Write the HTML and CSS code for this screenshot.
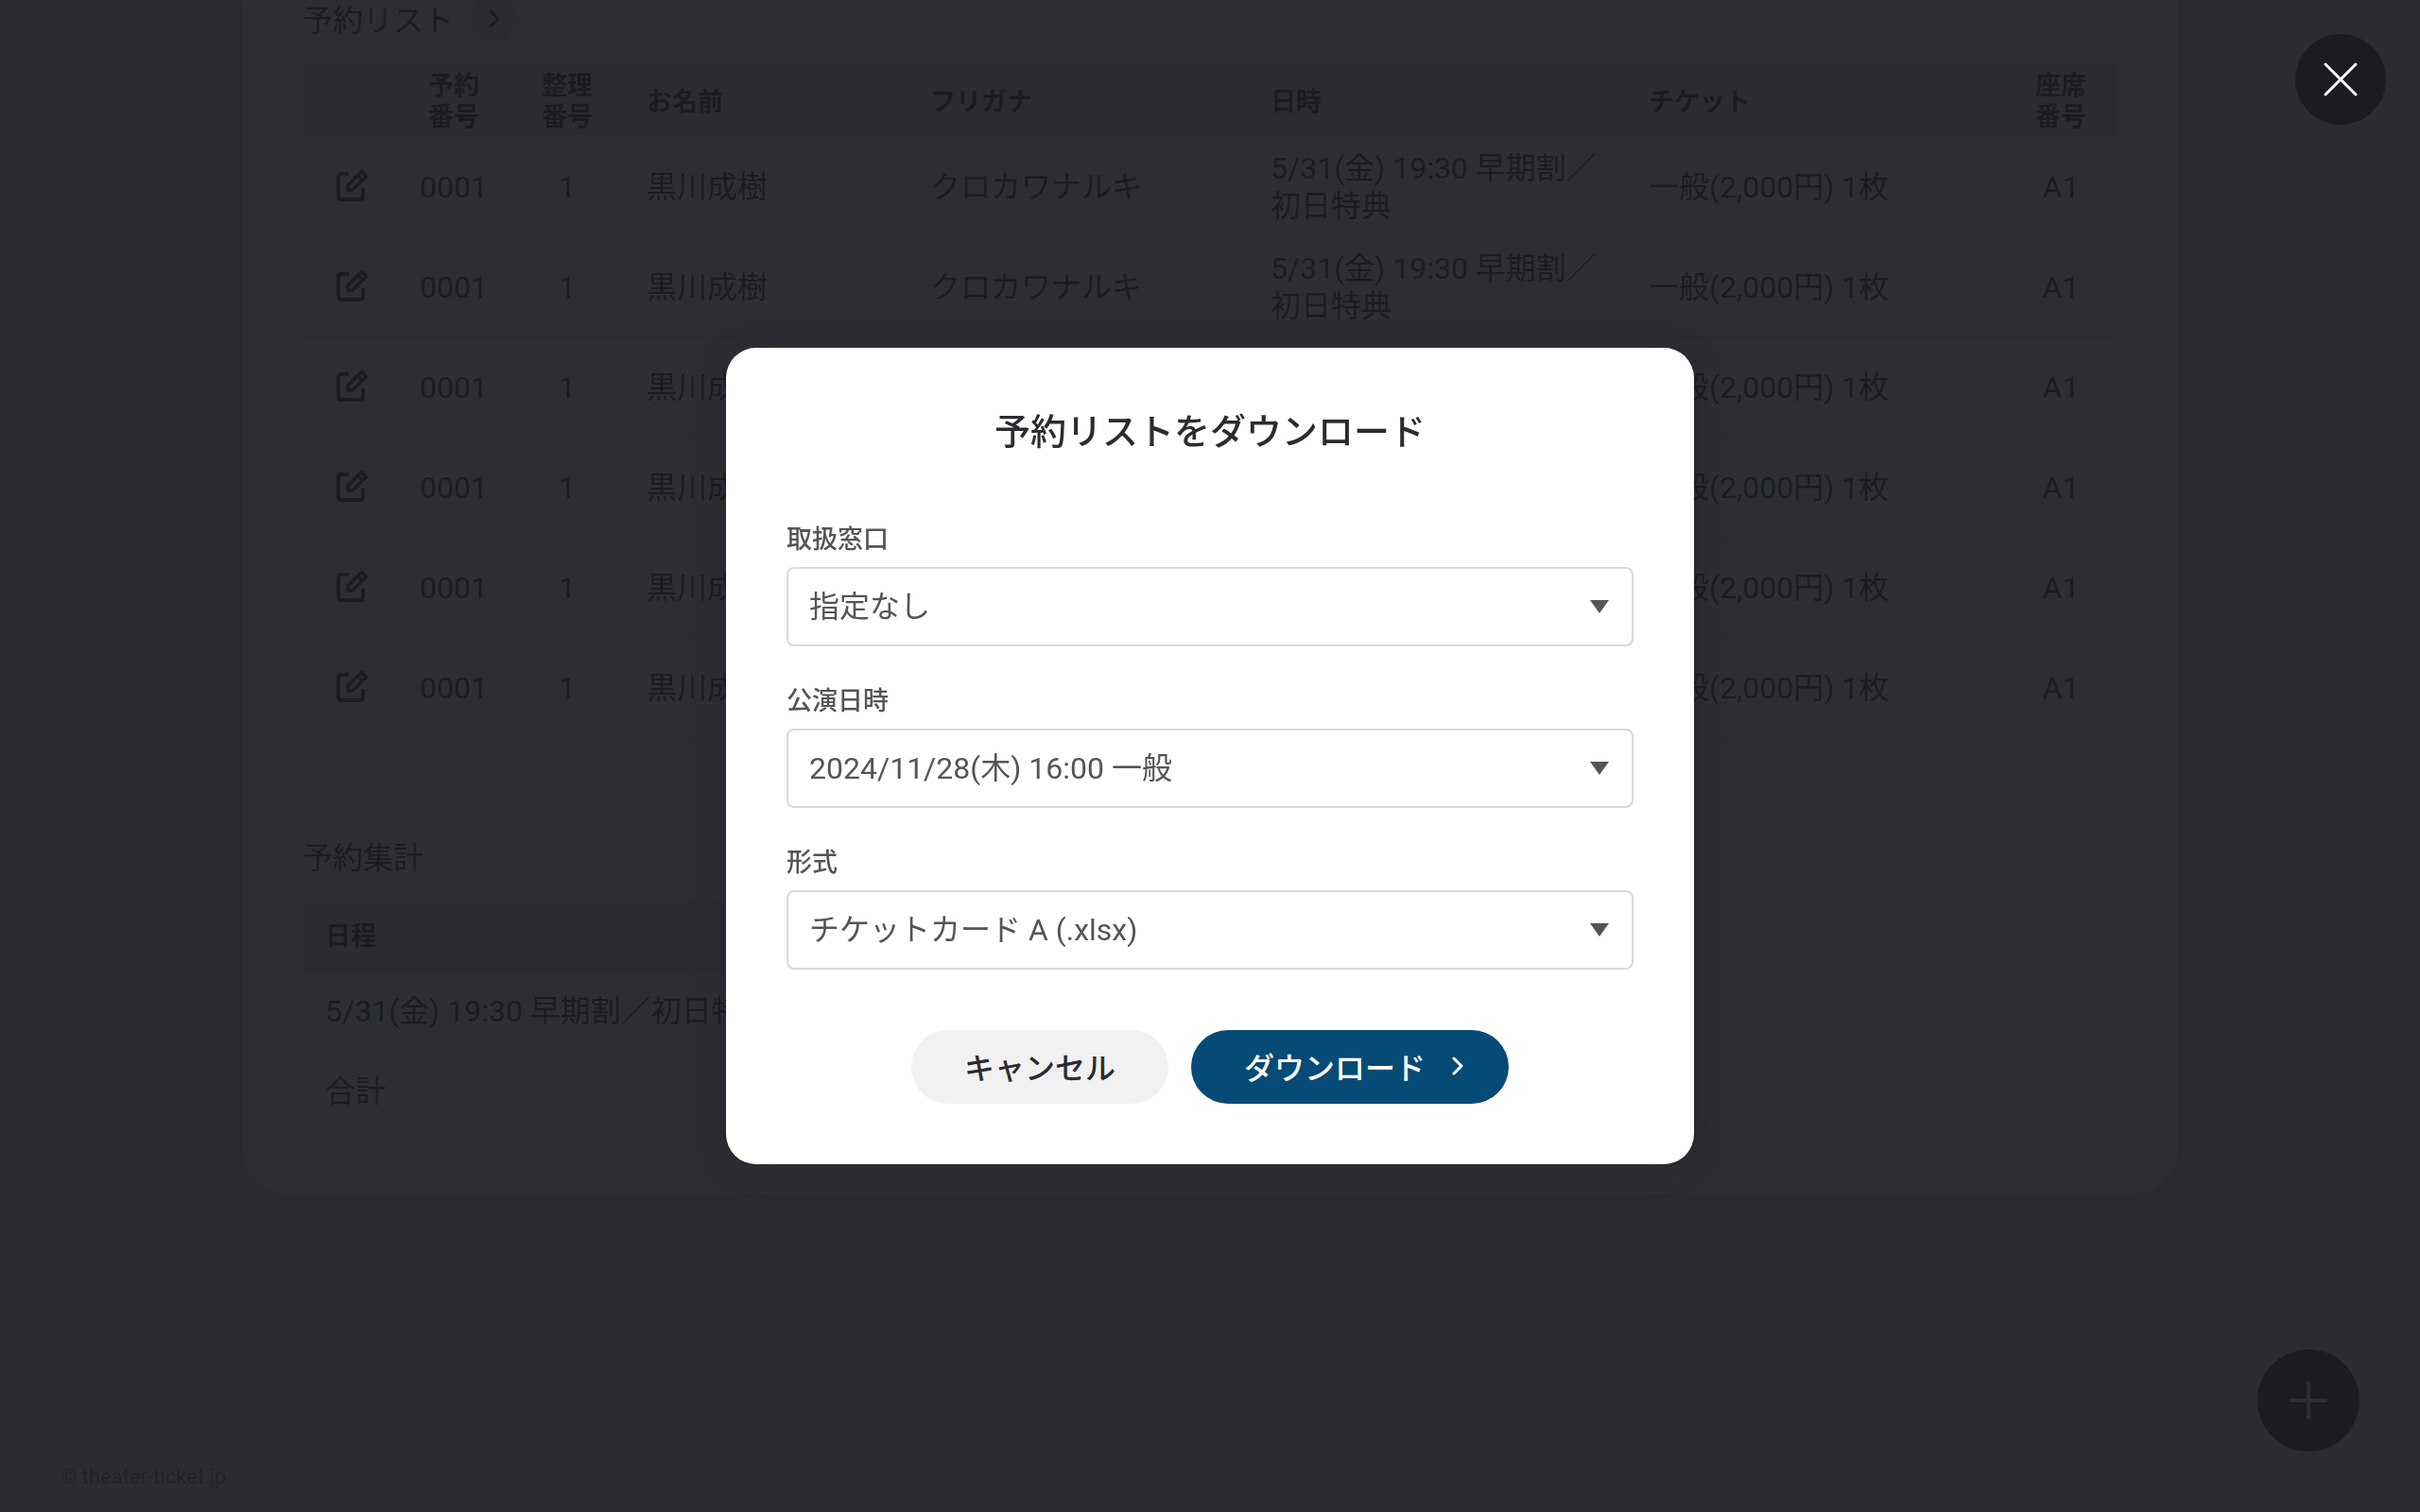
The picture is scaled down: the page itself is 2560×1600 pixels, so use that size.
FILE: index.html
```
<!DOCTYPE html>
<html lang="ja">
<head>
    <meta charset="UTF-8">
    <meta name="viewport" content="width=device-width, initial-scale=1.0">
    <title>予約リスト</title>
    <link rel="stylesheet" href="styles.css">
</head>
<body>

<svg class="symbols" aria-hidden="true">
    <symbol id="icon-edit" viewBox="0 0 34 34" fill="none" stroke="currentColor" stroke-width="4" stroke-linejoin="round">
        <path d="M13 5H5Q2 5 2 8V29Q2 32 5 32H25Q28 32 28 29V20"/>
        <path d="M12 17L26.500 2.500L31.500 7.500L17 22H12Z" stroke-width="3.500"/>
        <path d="M22.500 6.500L27.500 11.500" stroke-width="3"/>
    </symbol>
    <symbol id="icon-arrow" viewBox="0 0 12 20" fill="none" stroke="currentColor" stroke-width="3" stroke-linecap="round" stroke-linejoin="round">
        <path d="M2 2L10 10L2 18"/>
    </symbol>
</svg>

<main class="card">
    <section class="section">
        <div class="section-head">
            <h2>予約リスト</h2>
            <a href="#" class="more" aria-label="予約リストへ"><svg class="arrow"><use href="#icon-arrow"/></svg></a>
        </div>
        <table class="list">
            <colgroup>
                <col class="col-edit">
                <col class="col-num">
                <col class="col-num">
                <col class="col-name">
                <col class="col-kana">
                <col class="col-date">
                <col class="col-ticket">
                <col class="col-num">
            </colgroup>
            <thead>
                <tr>
                    <th></th>
                    <th class="center">予約<br>番号</th>
                    <th class="center">整理<br>番号</th>
                    <th>お名前</th>
                    <th>フリガナ</th>
                    <th>日時</th>
                    <th>チケット</th>
                    <th class="center">座席<br>番号</th>
                </tr>
            </thead>
            <tbody>
                <tr>
                    <td class="center"><a href="#" class="edit" aria-label="編集"><svg><use href="#icon-edit"/></svg></a></td>
                    <td class="center">0001</td>
                    <td class="center">1</td>
                    <td>黒川成樹</td>
                    <td>クロカワナルキ</td>
                    <td>5/31(金) 19:30 早期割／初日特典</td>
                    <td>一般(2,000円) 1枚</td>
                    <td class="center">A1</td>
                </tr>
                <tr>
                    <td class="center"><a href="#" class="edit" aria-label="編集"><svg><use href="#icon-edit"/></svg></a></td>
                    <td class="center">0001</td>
                    <td class="center">1</td>
                    <td>黒川成樹</td>
                    <td>クロカワナルキ</td>
                    <td>5/31(金) 19:30 早期割／初日特典</td>
                    <td>一般(2,000円) 1枚</td>
                    <td class="center">A1</td>
                </tr>
                <tr>
                    <td class="center"><a href="#" class="edit" aria-label="編集"><svg><use href="#icon-edit"/></svg></a></td>
                    <td class="center">0001</td>
                    <td class="center">1</td>
                    <td>黒川成樹</td>
                    <td>クロカワナルキ</td>
                    <td>5/31(金) 19:30 早期割／初日特典</td>
                    <td>一般(2,000円) 1枚</td>
                    <td class="center">A1</td>
                </tr>
                <tr>
                    <td class="center"><a href="#" class="edit" aria-label="編集"><svg><use href="#icon-edit"/></svg></a></td>
                    <td class="center">0001</td>
                    <td class="center">1</td>
                    <td>黒川成樹</td>
                    <td>クロカワナルキ</td>
                    <td>5/31(金) 19:30 早期割／初日特典</td>
                    <td>一般(2,000円) 1枚</td>
                    <td class="center">A1</td>
                </tr>
                <tr>
                    <td class="center"><a href="#" class="edit" aria-label="編集"><svg><use href="#icon-edit"/></svg></a></td>
                    <td class="center">0001</td>
                    <td class="center">1</td>
                    <td>黒川成樹</td>
                    <td>クロカワナルキ</td>
                    <td>5/31(金) 19:30 早期割／初日特典</td>
                    <td>一般(2,000円) 1枚</td>
                    <td class="center">A1</td>
                </tr>
                <tr>
                    <td class="center"><a href="#" class="edit" aria-label="編集"><svg><use href="#icon-edit"/></svg></a></td>
                    <td class="center">0001</td>
                    <td class="center">1</td>
                    <td>黒川成樹</td>
                    <td>クロカワナルキ</td>
                    <td>5/31(金) 19:30 早期割／初日特典</td>
                    <td>一般(2,000円) 1枚</td>
                    <td class="center">A1</td>
                </tr>
            </tbody>
        </table>
    </section>

    <section class="section">
        <div class="section-head">
            <h2>予約集計</h2>
        </div>
        <table class="summary">
            <thead>
                <tr><th>日程</th></tr>
            </thead>
            <tbody>
                <tr><td>5/31(金) 19:30 早期割／初日特典</td></tr>
                <tr><td>合計</td></tr>
            </tbody>
        </table>
    </section>
</main>

<footer class="footer">© theater-ticket.jp</footer>

<button type="button" class="round-btn add-btn" aria-label="追加">
    <svg viewBox="0 0 40 40"><path d="M20 2V38M2 20H38"/></svg>
</button>

<!-- モーダル -->
<div class="overlay">
    <div class="modal" role="dialog" aria-modal="true" aria-labelledby="modalTitle">
        <h1 id="modalTitle">予約リストをダウンロード</h1>

        <form id="downloadForm">
            <div class="input-group">
                <label for="counter">取扱窓口</label>
                <select id="counter" name="counter">
                    <option>指定なし</option>
                </select>
            </div>
            <div class="input-group">
                <label for="stage">公演日時</label>
                <select id="stage" name="stage">
                    <option>2024/11/28(木) 16:00 一般</option>
                </select>
            </div>
            <div class="input-group">
                <label for="format">形式</label>
                <select id="format" name="format">
                    <option>チケットカード A (.xlsx)</option>
                </select>
            </div>
            <div class="buttons">
                <button type="button" class="btn">キャンセル</button>
                <button type="submit" class="btn primary-btn">ダウンロード<svg class="arrow"><use href="#icon-arrow"/></svg></button>
            </div>
        </form>
    </div>

    <button type="button" class="round-btn close-btn" aria-label="閉じる">
        <svg viewBox="0 0 40 40"><path d="M4 4L36 36M36 4L4 36"/></svg>
    </button>
</div>

</body>
</html>
```

FILE: styles.css
```
* {
    box-sizing: border-box;
}

body {
    display: flex;
    flex-direction: column;
    min-height: 100vh;
    margin: 0;
    background-color: #dfe1ea;
    color: #1b1c21;
    font-family: Roboto, "Noto Sans CJK JP", sans-serif;
    font-size: 32px;
    line-height: 40px;
}

h1, h2 {
    margin: 0;
    font-weight: 500;
}

a {
    color: inherit;
}

button, select {
    font-family: inherit;
    font-size: inherit;
}

.symbols {
    position: absolute;
    width: 0;
    height: 0;
}

.card {
    width: 80%;
    margin: -4px auto 0;
    padding: 0 64px 64px;
    background-color: white;
    border-radius: 0 0 48px 48px;
    box-shadow: 0 4px 16px rgba(0, 0, 0, 0.1);
}

.section + .section {
    margin-top: 100px;
}

.section-head {
    display: flex;
    align-items: center;
    gap: 18px;
    height: 48px;
    margin-bottom: 24px;
}

h2 {
    padding-top: 4px;
    font-size: 32px;
    font-weight: 400;
}

.more {
    display: flex;
    justify-content: center;
    align-items: center;
    width: 48px;
    height: 48px;
    padding-left: 2px;
    border-radius: 50%;
    background-color: #e4e5ec;
}

.arrow {
    width: 12px;
    height: 20px;
}

/* テーブル */
table {
    width: 100%;
    border-collapse: separate;
    border-spacing: 0;
    table-layout: fixed;
}

th {
    padding: 7px 24px 5px;
    background-color: #e4e5ec;
    font-size: 27px;
    font-weight: 700;
    line-height: 33px;
    text-align: left;
}

td {
    padding: 12px 24px;
    border-bottom: 2px solid #e4e5ec;
}

.center {
    padding-left: 0;
    padding-right: 0;
    text-align: center;
}

.col-edit {
    width: 100px;
}

.col-num {
    width: 120px;
}

.col-name {
    width: 300px;
}

.col-kana {
    width: 360px;
}

.col-ticket {
    width: 400px;
}

.edit svg {
    display: block;
    width: 34px;
    height: 34px;
    margin: 0 auto;
}

.list .center:first-child {
    padding: 10px 0 14px 6px;
}

.summary {
    width: 50%;
}

.summary th {
    padding: 21px 24px;
}

.summary td {
    padding: 21px 24px 22px;
}

.footer {
    margin-top: auto;
    padding: 0 64px 24px;
    color: #666;
    font-size: 22px;
    line-height: 26px;
}

/* 丸ボタン */
.round-btn {
    position: fixed;
    display: flex;
    justify-content: center;
    align-items: center;
    padding: 0;
    border: none;
    border-radius: 50%;
    background-color: #1b1c21;
    cursor: pointer;
}

.round-btn svg {
    width: 40px;
    height: 40px;
    fill: none;
    stroke: white;
    stroke-width: 4;
    stroke-linecap: round;
}

.add-btn {
    right: 64px;
    bottom: 64px;
    width: 108px;
    height: 108px;
}

.close-btn {
    top: 36px;
    right: 36px;
    width: 96px;
    height: 96px;
}

.close-btn svg {
    stroke-width: 3;
}

/* モーダル */
.overlay {
    position: fixed;
    inset: 0;
    display: flex;
    justify-content: center;
    align-items: center;
    background-color: rgba(27, 28, 33, 0.92);
}

.modal {
    width: 40%;
    padding: 64px;
    border-radius: 32px;
    background-color: white;
    box-shadow: 0 4px 32px rgba(27, 28, 33, 0.3);
}

h1 {
    margin-bottom: 72px;
    color: #2b2c30;
    font-size: 38px;
    line-height: 50px;
    text-align: center;
}

.input-group {
    margin-bottom: 41px;
}

label {
    display: block;
    margin-bottom: 11px;
    color: #555;
    font-size: 27px;
    font-weight: 500;
    line-height: 35px;
}

select {
    display: block;
    width: 100%;
    height: 84px;
    padding: 0 64px 0 22px;
    border: 2px solid #d9d9d9;
    border-radius: 8px;
    appearance: none;
    background: white url("data:image/svg+xml,%3Csvg xmlns='http://www.w3.org/2000/svg' viewBox='0 0 20 14'%3E%3Cpath d='M0 0H20L10 14Z' fill='%23555'/%3E%3C/svg%3E") no-repeat right 24px center / 20px 14px;
    color: #555;
}

.buttons {
    display: flex;
    justify-content: center;
    gap: 24px;
    margin-top: 64px;
}

.btn {
    display: flex;
    align-items: center;
    height: 78px;
    padding: 0 56px 2px;
    border: none;
    border-radius: 40px;
    background-color: #f1f1f1;
    color: #2b2c30;
    font-weight: 500;
    cursor: pointer;
}

.primary-btn {
    gap: 28px;
    padding-right: 48px;
    background-color: #064b75;
    color: white;
}
```
